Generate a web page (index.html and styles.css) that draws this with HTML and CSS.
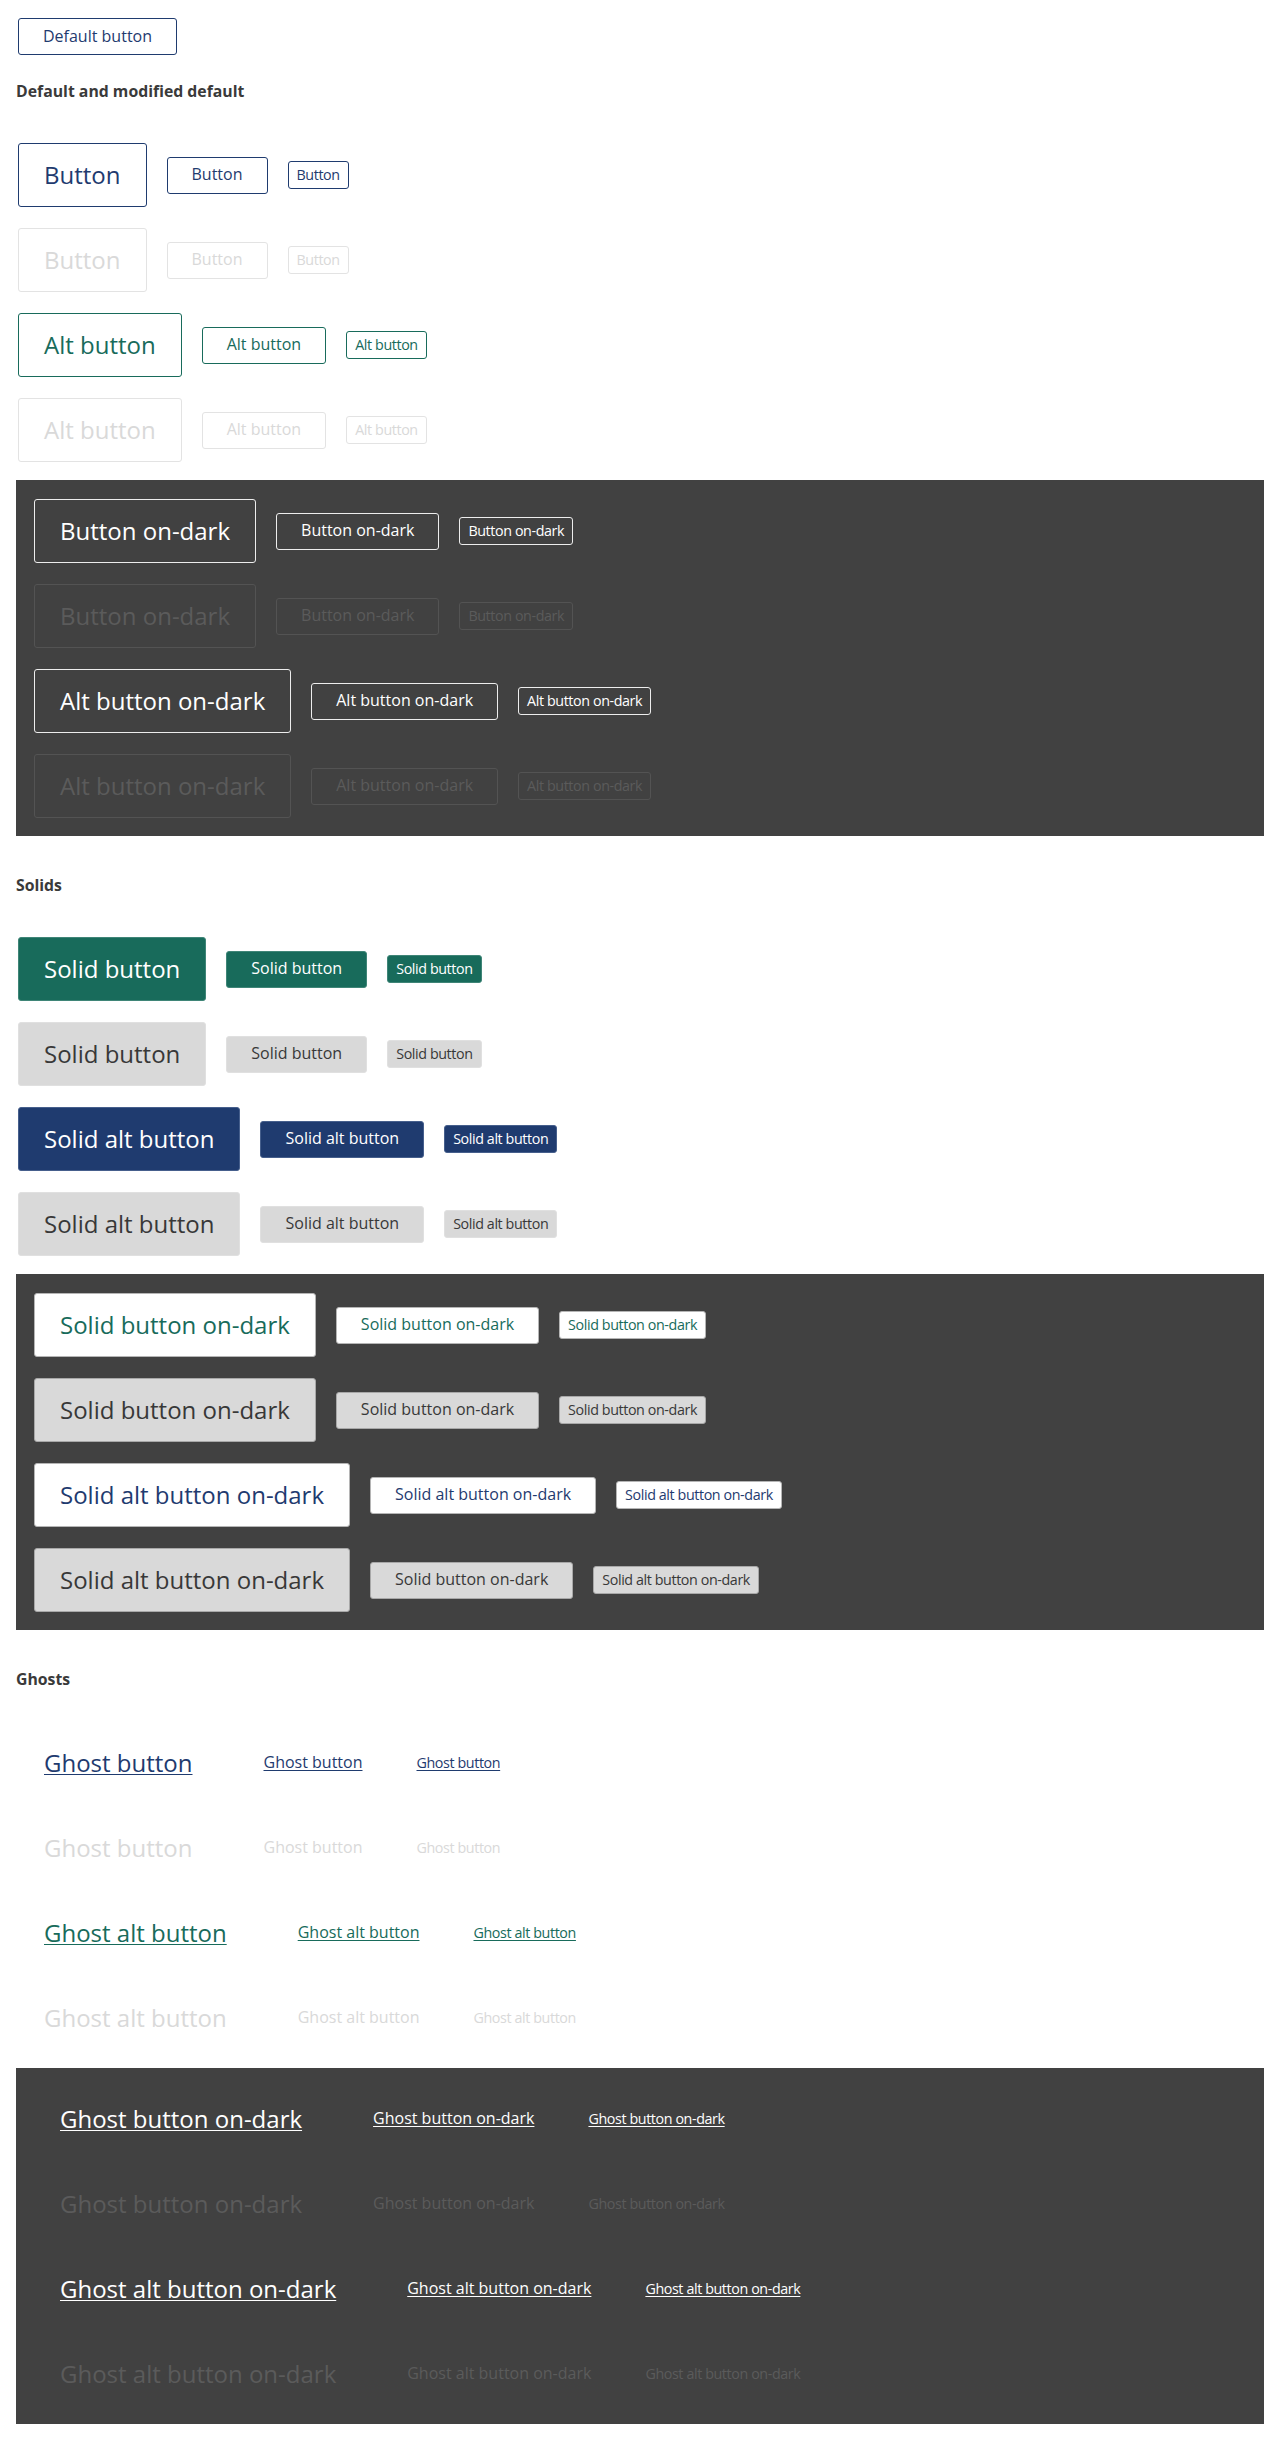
FILE: index.html
```html
<!DOCTYPE html>
<html lang="en">
<head>
<meta charset="utf-8">
<title>Buttons</title>
<link rel="stylesheet" href="styles.css">
</head>
<body>
<main class="page">
  <div class="row row--default">
    <button class="btn md outline">Default button</button>
  </div>

  <h2 class="heading heading--first">Default and modified default</h2>
  <section class="rows">
    <div class="row">
      <button class="btn lg outline">Button</button>
      <button class="btn md outline">Button</button>
      <button class="btn sm outline">Button</button>
    </div>
    <div class="row">
      <button class="btn lg outline-dis">Button</button>
      <button class="btn md outline-dis">Button</button>
      <button class="btn sm outline-dis">Button</button>
    </div>
    <div class="row">
      <button class="btn lg outline-alt">Alt button</button>
      <button class="btn md outline-alt">Alt button</button>
      <button class="btn sm outline-alt">Alt button</button>
    </div>
    <div class="row">
      <button class="btn lg outline-dis">Alt button</button>
      <button class="btn md outline-dis">Alt button</button>
      <button class="btn sm outline-dis">Alt button</button>
    </div>
  </section>
  <section class="rows panel">
    <div class="row">
      <button class="btn lg outline-dark">Button on-dark</button>
      <button class="btn md outline-dark">Button on-dark</button>
      <button class="btn sm outline-dark">Button on-dark</button>
    </div>
    <div class="row">
      <button class="btn lg outline-dark-dis">Button on-dark</button>
      <button class="btn md outline-dark-dis">Button on-dark</button>
      <button class="btn sm outline-dark-dis">Button on-dark</button>
    </div>
    <div class="row">
      <button class="btn lg outline-dark">Alt button on-dark</button>
      <button class="btn md outline-dark">Alt button on-dark</button>
      <button class="btn sm outline-dark">Alt button on-dark</button>
    </div>
    <div class="row">
      <button class="btn lg outline-dark-dis">Alt button on-dark</button>
      <button class="btn md outline-dark-dis">Alt button on-dark</button>
      <button class="btn sm outline-dark-dis">Alt button on-dark</button>
    </div>
  </section>

  <h2 class="heading">Solids</h2>
  <section class="rows">
    <div class="row">
      <button class="btn lg solid">Solid button</button>
      <button class="btn md solid">Solid button</button>
      <button class="btn sm solid">Solid button</button>
    </div>
    <div class="row">
      <button class="btn lg solid-grey">Solid button</button>
      <button class="btn md solid-grey">Solid button</button>
      <button class="btn sm solid-grey">Solid button</button>
    </div>
    <div class="row">
      <button class="btn lg solid-alt">Solid alt button</button>
      <button class="btn md solid-alt">Solid alt button</button>
      <button class="btn sm solid-alt">Solid alt button</button>
    </div>
    <div class="row">
      <button class="btn lg solid-grey">Solid alt button</button>
      <button class="btn md solid-grey">Solid alt button</button>
      <button class="btn sm solid-grey">Solid alt button</button>
    </div>
  </section>
  <section class="rows panel">
    <div class="row">
      <button class="btn lg solid-white">Solid button on-dark</button>
      <button class="btn md solid-white">Solid button on-dark</button>
      <button class="btn sm solid-white">Solid button on-dark</button>
    </div>
    <div class="row">
      <button class="btn lg solid-grey-dark">Solid button on-dark</button>
      <button class="btn md solid-grey-dark">Solid button on-dark</button>
      <button class="btn sm solid-grey-dark">Solid button on-dark</button>
    </div>
    <div class="row">
      <button class="btn lg solid-white-alt">Solid alt button on-dark</button>
      <button class="btn md solid-white-alt">Solid alt button on-dark</button>
      <button class="btn sm solid-white-alt">Solid alt button on-dark</button>
    </div>
    <div class="row">
      <button class="btn lg solid-grey-dark">Solid alt button on-dark</button>
      <button class="btn md solid-grey-dark">Solid button on-dark</button>
      <button class="btn sm solid-grey-dark">Solid alt button on-dark</button>
    </div>
  </section>

  <h2 class="heading">Ghosts</h2>
  <section class="rows">
    <div class="row">
      <button class="btn lg ghost">Ghost button</button>
      <button class="btn md ghost">Ghost button</button>
      <button class="btn sm ghost">Ghost button</button>
    </div>
    <div class="row">
      <button class="btn lg ghost-dis">Ghost button</button>
      <button class="btn md ghost-dis">Ghost button</button>
      <button class="btn sm ghost-dis">Ghost button</button>
    </div>
    <div class="row">
      <button class="btn lg ghost-alt">Ghost alt button</button>
      <button class="btn md ghost-alt">Ghost alt button</button>
      <button class="btn sm ghost-alt">Ghost alt button</button>
    </div>
    <div class="row">
      <button class="btn lg ghost-dis">Ghost alt button</button>
      <button class="btn md ghost-dis">Ghost alt button</button>
      <button class="btn sm ghost-dis">Ghost alt button</button>
    </div>
  </section>
  <section class="rows panel">
    <div class="row">
      <button class="btn lg ghost-dark">Ghost button on-dark</button>
      <button class="btn md ghost-dark">Ghost button on-dark</button>
      <button class="btn sm ghost-dark">Ghost button on-dark</button>
    </div>
    <div class="row">
      <button class="btn lg ghost-dark-dis">Ghost button on-dark</button>
      <button class="btn md ghost-dark-dis">Ghost button on-dark</button>
      <button class="btn sm ghost-dark-dis">Ghost button on-dark</button>
    </div>
    <div class="row">
      <button class="btn lg ghost-dark">Ghost alt button on-dark</button>
      <button class="btn md ghost-dark">Ghost alt button on-dark</button>
      <button class="btn sm ghost-dark">Ghost alt button on-dark</button>
    </div>
    <div class="row">
      <button class="btn lg ghost-dark-dis">Ghost alt button on-dark</button>
      <button class="btn md ghost-dark-dis">Ghost alt button on-dark</button>
      <button class="btn sm ghost-dark-dis">Ghost alt button on-dark</button>
    </div>
  </section>
</main>
</body>
</html>
```

FILE: styles.css
```css
* { box-sizing: border-box; }

html, body {
  margin: 0;
  padding: 0;
  background: #ffffff;
}

body {
  font-family: "Open Sans", "Liberation Sans", sans-serif;
  color: #333333;
}

.page {
  padding: 18px 16px 18px 16px;
}

.heading {
  margin: 39px 0 0 0;
  font-size: 15.8px;
  line-height: 20px;
  font-weight: 700;
  color: #3a3a3a;
}

.heading--first {
  margin-top: 26px;
}

.rows {
  display: flex;
  flex-direction: column;
  gap: 21px;
  margin-top: 42px;
}

.panel {
  margin-top: 18px;
  padding: 19px 16px 18px 16px;
  background: #414141;
}

.row {
  display: flex;
  align-items: center;
  gap: 20px;
  height: 64px;
  padding-left: 2px;
}

.row--default {
  height: auto;
}

/* base button */
.btn {
  display: inline-flex;
  align-items: center;
  justify-content: center;
  margin: 0;
  font-family: "Open Sans", "Liberation Sans", sans-serif;
  font-weight: 400;
  white-space: nowrap;
  background: transparent;
  border: 1px solid transparent;
  border-radius: 3px;
  cursor: pointer;
  line-height: 1.2;
}

.lg {
  height: 64px;
  padding: 0 25px;
  font-size: 24px;
}

.md {
  height: 37px;
  padding: 0 24px;
  font-size: 16px;
}

.sm {
  height: 28px;
  padding: 0 8px;
  font-size: 14.3px;
  letter-spacing: -0.4px;
}

/* outlines */
.outline {
  border-color: #1f3b6f;
  color: #1f3b6f;
}

.outline-alt {
  border-color: #186b5b;
  color: #186b5b;
}

.outline-dis {
  border-color: #e3e3e3;
  color: #d9d9d9;
}

.outline-dark {
  border-color: #ededed;
  color: #ffffff;
}

.outline-dark-dis {
  border-color: #535353;
  color: #5b5b5b;
}

/* solids */
.solid {
  background: #186b5b;
  border-color: #3f8577;
  color: #ffffff;
}

.solid-alt {
  background: #1f3b6f;
  border-color: #465f8c;
  color: #ffffff;
}

.solid-grey {
  background: #d9d9d9;
  border-color: #e0e0e0;
  color: #383838;
}

.solid-white {
  background: #ffffff;
  border-color: #b5b5b5;
  color: #186b5b;
}

.solid-white-alt {
  background: #ffffff;
  border-color: #b5b5b5;
  color: #1f3b6f;
}

.solid-grey-dark {
  background: #d9d9d9;
  border-color: #a8a8a8;
  color: #383838;
}

/* ghosts */
.ghost,
.ghost-alt,
.ghost-dark {
  text-decoration: underline;
  text-underline-offset: 2px;
  text-decoration-thickness: 1px;
}

.ghost { color: #1f3b6f; }
.ghost-alt { color: #186b5b; }
.ghost-dis { color: #d9d9d9; }
.ghost-dark { color: #ffffff; }
.ghost-dark-dis { color: #5b5b5b; }
```
